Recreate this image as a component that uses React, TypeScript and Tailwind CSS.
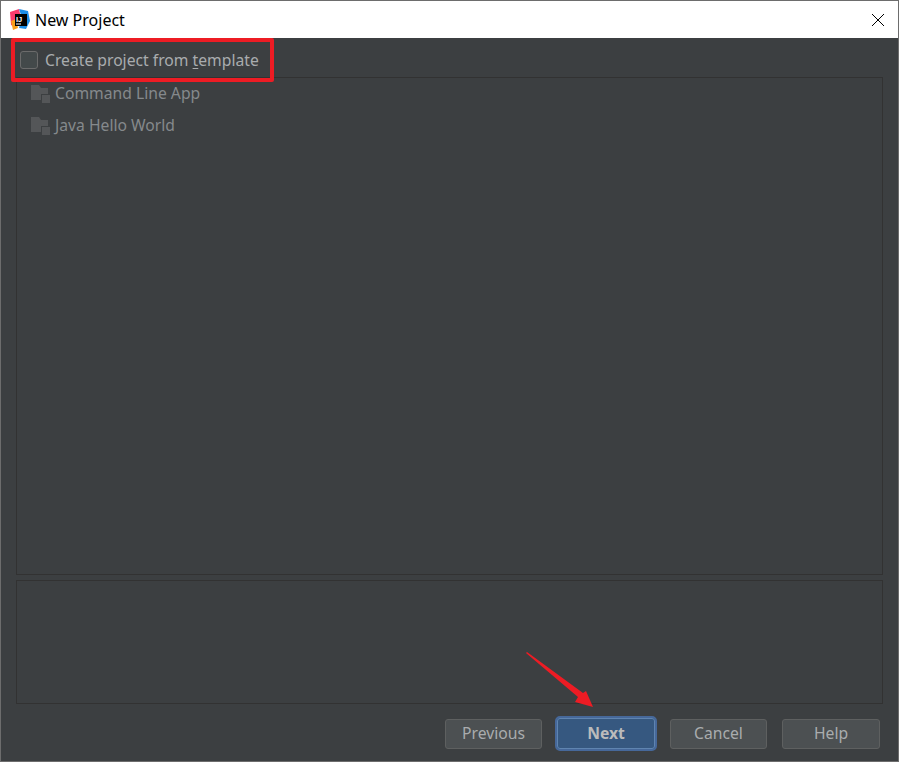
const FolderIcon = () => (
  <svg width="19" height="18" viewBox="0 0 19 18" className="shrink-0">
    <path d="M0 0h8l2 3h7v6h-7v6H0z" fill="#545658" />
    <rect x="11" y="10" width="8" height="8" fill="#545658" />
  </svg>
);

const IdeaLogo = () => (
  <svg width="20" height="21" viewBox="0 0 20 21" className="shrink-0">
    <path d="M0 3l9-3 2 9-6 9-4-2z" fill="#fc3b6e" />
    <path d="M9 0l9 2 2 10-4 8-7-1 3-10z" fill="#1c8ee8" />
    <path d="M1 12l5-2 2 9-5 2z" fill="#f9a01b" />
    <rect x="5" y="5" width="12" height="12" fill="#000" />
    <rect x="6" y="14.5" width="5" height="1" fill="#fff" />
    <text x="6" y="12.5" fill="#fff" fontSize="7.5" fontWeight="700" fontFamily="'Liberation Sans', sans-serif">IJ</text>
  </svg>
);

const ListRow = ({ label }: { label: string }) => (
  <div className="flex h-8 items-center gap-[5px] pl-[14px] text-[#85898c]">
    <FolderIcon />
    <span>{label}</span>
  </div>
);

const Btn = ({ label, className }: { label: string; className: string }) => (
  <button className={`flex h-[30px] items-center justify-center rounded-[3px] border border-[#5e6060] bg-[#4c5052] text-[#a9acae] ${className}`}>
    {label}
  </button>
);

export default function App() {
  return (
    <div className="relative flex h-[762px] w-[899px] flex-col border border-[#6d6d6d] bg-[#3c3f41] font-['Noto_Sans','Open_Sans',sans-serif] text-[15.7px]">
      {/* title bar */}
      <div className="flex h-[37px] shrink-0 items-center bg-white pl-[9px] pr-[13px] text-[16px] text-black">
        <IdeaLogo />
        <span className="ml-[5px] flex-1">New Project</span>
        <svg width="14" height="14" viewBox="0 0 14 14" stroke="#000" strokeWidth="1">
          <path d="M1 1l12 12M13 1L1 13" />
        </svg>
      </div>

      {/* body */}
      <div className="flex flex-1 flex-col px-[15px]">
        <div className="flex h-[39px] shrink-0 items-center gap-[7px] pl-[4px] pt-[4px] text-[#a9acae]">
          <span className="h-[18px] w-[18px] rounded-[3px] border border-[#6b6b6b] bg-[#43494a]" />
          <span className="translate-y-px">
            Create project from <span className="underline underline-offset-2">t</span>emplate
          </span>
        </div>

        <div className="h-[498px] shrink-0 border border-[#323232]">
          <ListRow label="Command Line App" />
          <ListRow label="Java Hello World" />
        </div>

        <div className="mt-[5px] h-[124px] shrink-0 border border-[#323232]" />

        <div className="flex flex-1 items-center justify-end pr-[3px] pt-[2px]">
          <Btn label="Previous" className="w-[97px]" />
          <button className="mx-[13px] flex h-[35px] w-[102px] items-center justify-center rounded-[5px] border-[2px] border-[#46689a] bg-[#365880] font-bold text-[#bbbbbb] outline outline-1 -outline-offset-[3px] outline-[#5f84b0]">
            Next
          </button>
          <Btn label="Cancel" className="w-[97px]" />
          <Btn label="Help" className="ml-[15px] w-[98px]" />
        </div>
      </div>

      {/* annotations */}
      <div className="absolute left-[10px] top-[37px] h-[44px] w-[263px] rounded-[2px] border-[4px] border-[#ed1c24]" />
      <svg className="absolute left-[525px] top-[651px]" width="72" height="57" viewBox="0 0 72 57">
        <path d="M0 1L1 0 57 41l3-2 7 16-18-5 3-5z" fill="#ed1c24" />
      </svg>
    </div>
  );
}
